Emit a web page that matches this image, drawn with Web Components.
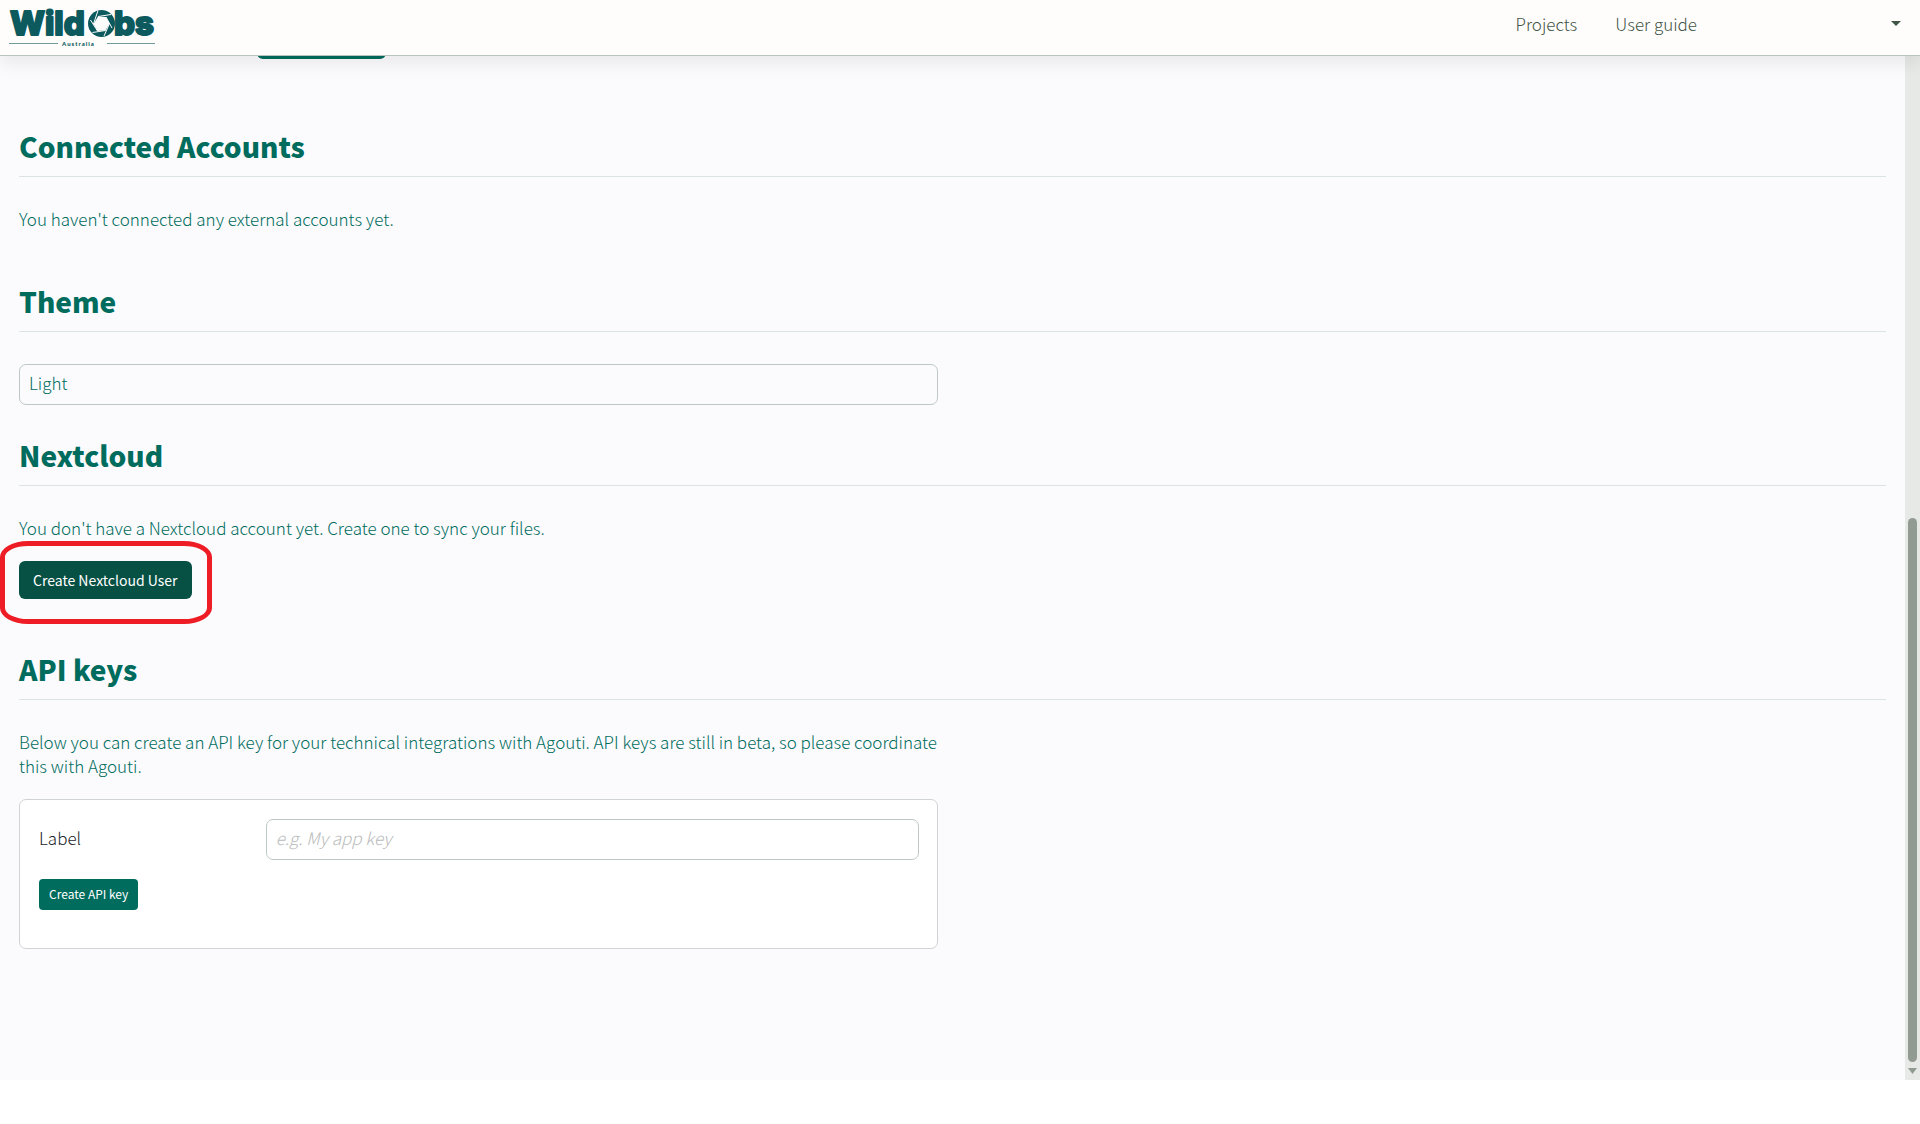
<!DOCTYPE html>
<html lang="en">
<head>
<meta charset="utf-8">
<title>WildObs Australia</title>
<style>
	html, body {
		height: 100%;
		margin: 0;
	}
	body {
		--green: #006c5d;
		--green-dark: #075144;
		--line: #dbe4e3;
		--field-line: #bdc8c8;
		background: #fff;
		color: var(--green);
		font: 300 17px/24px "Noto Sans CJK SC", "Noto Sans", sans-serif;
	}
</style>
</head>
<body>

<wo-app>
	<wo-navbar slot="header">
		<wo-nav-link href="#projects">Projects</wo-nav-link>
		<wo-nav-link href="#guide">User guide</wo-nav-link>
	</wo-navbar>

	<wo-save-bar></wo-save-bar>

	<wo-section heading="Connected Accounts">
		<wo-text>You haven't connected any external accounts yet.</wo-text>
	</wo-section>

	<wo-section heading="Theme" tight>
		<wo-select label="Theme" options="Light,Dark"></wo-select>
	</wo-section>

	<wo-section heading="Nextcloud">
		<wo-text>You don't have a Nextcloud account yet. Create one to sync your files.</wo-text>
		<wo-highlight>
			<wo-button variant="dark">Create Nextcloud User</wo-button>
		</wo-highlight>
	</wo-section>

	<wo-section heading="API keys">
		<wo-text>Below you can create an API key for your technical integrations with Agouti. API keys are still in beta, so please coordinate this with Agouti.</wo-text>
		<wo-key-form></wo-key-form>
	</wo-section>
</wo-app>

<script>
class WoElement extends HTMLElement {

	constructor(){

		super()

		this.shadow = this.attachShadow({mode: 'open'})

	}

	connectedCallback() {

		this.render()

	}

}

class WoApp extends WoElement {

	render(){

		this.shadow.innerHTML = `
			<style>
				:host{
					display: flex;
					flex-direction: column;
					height: 100%;
					box-sizing: border-box;
					padding-bottom: 44px;
				}
				.view{
					flex: 1;
					min-height: 0;
					display: flex;
					background: #fbfbfd;
				}
				main{
					flex: 1;
					min-width: 0;
					overflow: hidden;
					padding: 0 19px;
				}
			</style>
			<slot name="header"></slot>
			<div class="view">
				<main><slot></slot></main>
				<wo-scrollbar></wo-scrollbar>
			</div>
		`;

	}

}

class WoNavbar extends WoElement {

	render(){

		this.shadow.innerHTML = `
			<style>
				:host{
					display: block;
					position: relative;
					z-index: 10;
					color: #3f5546;
					background: #fffdfc;
					border-bottom: 1px solid #b9c5c0;
					box-shadow: 0 8px 16px rgba(0, 0, 0, .07);
				}
				header{
					display: flex;
					align-items: center;
					justify-content: space-between;
					height: 55px;
					padding: 0 8px;
				}
				nav{
					display: flex;
					align-items: center;
					gap: 38px;
					padding-bottom: 7px;
				}
				button{
					display: flex;
					align-items: center;
					justify-content: flex-end;
					width: 177px;
					height: 24px;
					border: 0;
					padding: 0 11px 2px 0;
					background: none;
					color: inherit;
				}
				svg{
					display: block;
				}
			</style>
			<header>
				<wo-logo></wo-logo>
				<nav>
					<slot></slot>
					<button type="button" aria-label="Account menu">
						<svg width="10" height="5" viewBox="0 0 10 5"><path d="M0 0h10L5 5z" fill="currentColor"/></svg>
					</button>
				</nav>
			</header>
		`;

	}

}

class WoNavLink extends WoElement {

	render(){

		this.shadow.innerHTML = `
			<style>
				:host{
					display: block;
				}
				a{
					color: inherit;
					text-decoration: none;
				}
			</style>
			<a href="${this.getAttribute('href')}"><slot></slot></a>
		`;

	}

}

class WoLogo extends WoElement {

	render(){

		this.shadow.innerHTML = `
			<style>
				:host{
					display: block;
				}
				a, svg{
					display: block;
				}
				.word{
					font: 800 33px Inter, sans-serif;
					stroke: #0c5a5e;
					stroke-width: 2;
					stroke-linejoin: round;
				}
				.sub{
					font: 900 6px Lato, sans-serif;
					letter-spacing: 1px;
				}
			</style>
			<a href="#home" aria-label="WildObs Australia">
				<svg width="156" height="55" viewBox="8 0 156 55" fill="#0c5a5e">
					<text class="word" x="10" y="35">Wild</text>
					<text class="word" x="114" y="35">bs</text>
					<circle cx="101.500" cy="23.500" r="13.500"/>
					<path d="M98 16.500l8 .5 3.500 6.500-4 7-8 .5-4-7z" fill="#fffdfc"/>
					<path d="M98 16.500l13-2M106 17l6 11M109.500 23.500L104 36M105.500 30.500l-13 2M97.500 31l-7-11M93.500 24L98 10.500" stroke="#fffdfc" fill="none"/>
					<path d="M9 43.500h49M107 43.500h48" stroke="#6f9c9b" fill="none"/>
					<text class="sub" x="62" y="46">Australia</text>
				</svg>
			</a>
		`;

	}

}

class WoSaveBar extends WoElement {

	render(){

		// scrolled almost out of view, only the lower edge of the button shows
		this.shadow.innerHTML = `
			<style>
				:host{
					display: block;
					margin: -35px 0 69px;
					padding-left: 238px;
				}
				button{
					display: block;
					width: 129px;
					height: 38px;
					border: 0;
					border-radius: 6px;
					background: var(--green);
				}
			</style>
			<button type="button" aria-label="Save"></button>
		`;

	}

}

class WoSection extends WoElement {

	render(){

		this.shadow.innerHTML = `
			<style>
				:host{
					display: block;
					margin-bottom: 52px;
				}
				:host([tight]){
					margin-bottom: 32px;
				}
				h2{
					margin: 0 0 30px;
					padding-bottom: 12px;
					border-bottom: 1px solid var(--line);
					font-size: 28px;
					font-weight: 900;
					line-height: 36px;
				}
				:host([tight]) h2{
					margin-bottom: 32px;
				}
				.body{
					display: flex;
					flex-direction: column;
					align-items: flex-start;
					gap: 21px;
					width: calc(50% - 15px);
				}
			</style>
			<h2>${this.getAttribute('heading')}</h2>
			<div class="body"><slot></slot></div>
		`;

	}

}

class WoText extends WoElement {

	render(){

		this.shadow.innerHTML = `
			<style>
				:host{
					display: block;
				}
				p{
					margin: 0;
				}
			</style>
			<p><slot></slot></p>
		`;

	}

}

class WoSelect extends WoElement {

	render(){

		const options = this.getAttribute('options').split(',')

		this.shadow.innerHTML = `
			<style>
				:host{
					display: block;
					width: 100%;
				}
				select{
					display: block;
					appearance: none;
					box-sizing: border-box;
					width: 100%;
					height: 41px;
					padding: 5px 9px 9px;
					border: 1px solid var(--field-line);
					border-radius: 7px;
					background: transparent;
					color: inherit;
					font: inherit;
				}
			</style>
			<select aria-label="${this.getAttribute('label')}">
				${options.map(o => `<option>${o}</option>`).join('')}
			</select>
		`;

	}

}

class WoButton extends WoElement {

	render(){

		this.shadow.innerHTML = `
			<style>
				:host{
					display: block;
				}
				button{
					display: block;
					padding: 5px 10px 6px;
					border: 0;
					border-radius: 4px;
					background: var(--green);
					color: #fff;
					font: 400 12px/20px "Noto Sans CJK SC", "Noto Sans", sans-serif;
				}
				:host([variant="dark"]) button{
					padding: 9px 14px;
					border-radius: 6px;
					background: var(--green-dark);
					font-size: 14px;
				}
			</style>
			<button type="button"><slot></slot></button>
		`;

	}

}

class WoHighlight extends WoElement {

	render(){

		this.shadow.innerHTML = `
			<style>
				:host{
					display: block;
					position: relative;
				}
				.ring{
					position: absolute;
					inset: -20px -20px -25px -19px;
					border: 5px solid #ee1c24;
					border-radius: 28px / 16px;
					pointer-events: none;
				}
			</style>
			<slot></slot>
			<div class="ring"></div>
		`;

	}

}

class WoKeyForm extends WoElement {

	render(){

		this.shadow.innerHTML = `
			<style>
				:host{
					display: block;
					width: 100%;
				}
				form{
					box-sizing: border-box;
					padding: 19px 18px 38px 19px;
					border: 1px solid #d0d3d3;
					border-radius: 7px;
					background: #fff;
				}
				.row{
					display: grid;
					grid-template-columns: 1fr 3fr;
					align-items: center;
					gap: 9px;
					margin-bottom: 19px;
				}
				label{
					padding-bottom: 4px;
					color: #212529;
				}
				input{
					box-sizing: border-box;
					width: 100%;
					height: 41px;
					padding: 4px 9px 8px;
					border: 1px solid var(--field-line);
					border-radius: 7px;
					background: #fff;
					color: inherit;
					font: inherit;
				}
				input::placeholder{
					color: #b8baba;
					font-style: italic;
				}
			</style>
			<form>
				<div class="row">
					<label for="key-label">Label</label>
					<input id="key-label" type="text" placeholder="e.g. My app key">
				</div>
				<wo-button>Create API key</wo-button>
			</form>
		`;

	}

}

class WoScrollbar extends WoElement {

	render(){

		this.shadow.innerHTML = `
			<style>
				:host{
					display: flex;
					flex-direction: column;
					align-items: center;
					width: 15px;
					background: #e6e9e5;
				}
				.above{
					flex: 462;
				}
				.thumb{
					flex: 544;
					width: 9px;
					border-radius: 5px;
					background: #929b91;
				}
				svg{
					margin: 6px 0;
				}
			</style>
			<div class="above"></div>
			<div class="thumb"></div>
			<svg width="9" height="6" viewBox="0 0 9 6"><path d="M0 0h9L4.500 6z" fill="#929b91"/></svg>
		`;

	}

}

customElements.define('wo-app', WoApp)
customElements.define('wo-navbar', WoNavbar)
customElements.define('wo-nav-link', WoNavLink)
customElements.define('wo-logo', WoLogo)
customElements.define('wo-save-bar', WoSaveBar)
customElements.define('wo-section', WoSection)
customElements.define('wo-text', WoText)
customElements.define('wo-select', WoSelect)
customElements.define('wo-button', WoButton)
customElements.define('wo-highlight', WoHighlight)
customElements.define('wo-key-form', WoKeyForm)
customElements.define('wo-scrollbar', WoScrollbar)
</script>
</body>
</html>
